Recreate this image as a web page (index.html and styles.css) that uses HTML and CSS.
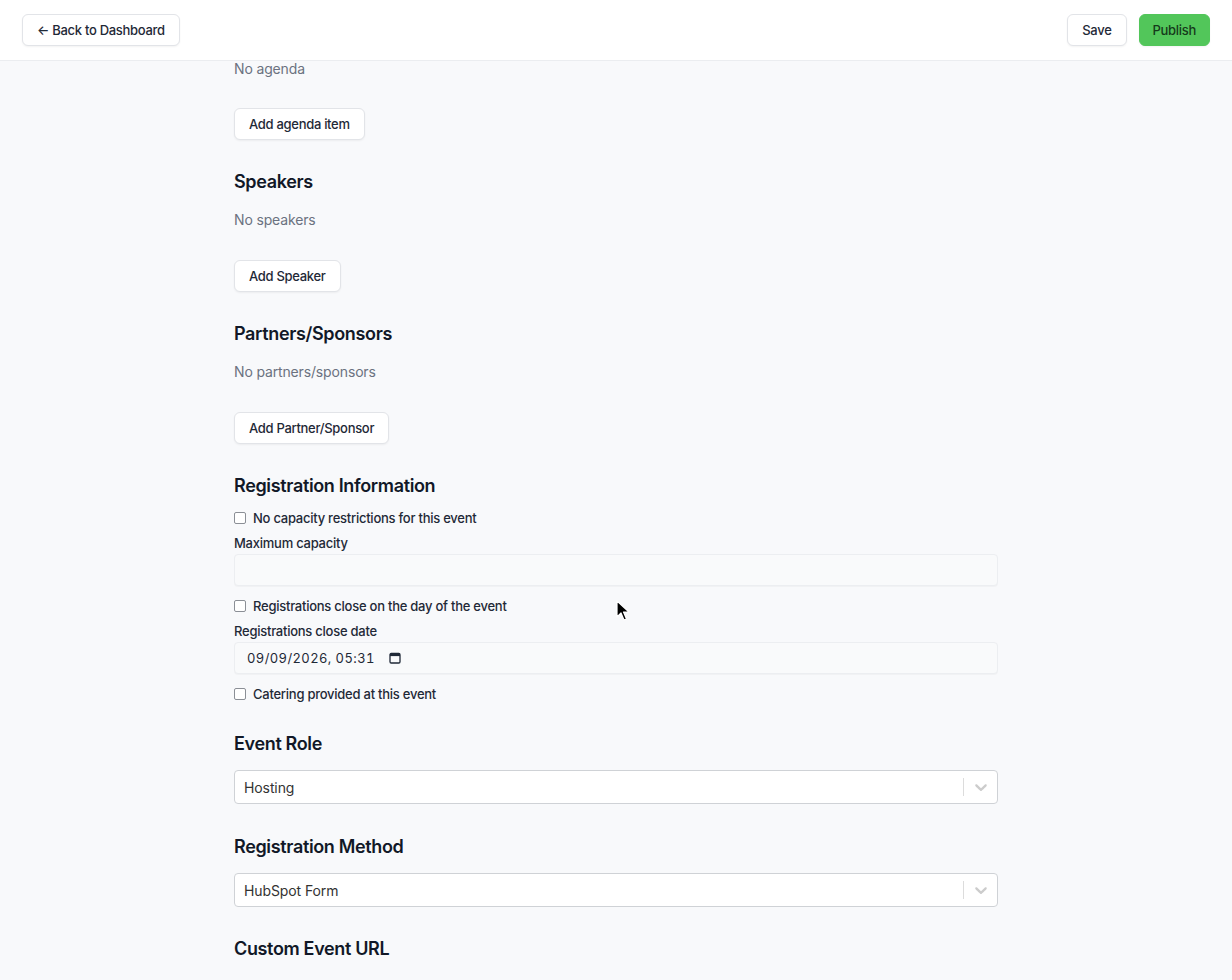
FILE: index.html
```html
<!DOCTYPE html>
<html lang="en">
<head>
    <meta charset="UTF-8">
    <meta name="viewport" content="width=device-width, initial-scale=1.0">
    <title>Edit Event</title>
    <link rel="stylesheet" href="styles.css">
</head>
<body>
    <header class="topbar">
        <button class="btn">← Back to Dashboard</button>
        <div class="topbar-actions">
            <button class="btn">Save</button>
            <button class="btn btn-publish">Publish</button>
        </div>
    </header>

    <main class="editor">
        <section class="block block-first">
            <p class="empty">No agenda</p>
            <button class="btn">Add agenda item</button>
        </section>

        <section class="block">
            <h2>Speakers</h2>
            <p class="empty">No speakers</p>
            <button class="btn">Add Speaker</button>
        </section>

        <section class="block">
            <h2>Partners/Sponsors</h2>
            <p class="empty">No partners/sponsors</p>
            <button class="btn">Add Partner/Sponsor</button>
        </section>

        <section class="block block-reg">
            <h2>Registration Information</h2>
            <label class="check"><span class="box"></span>No capacity restrictions for this event</label>
            <div class="field">
                <label class="field-label">Maximum capacity</label>
                <div class="input"></div>
            </div>
            <label class="check"><span class="box"></span>Registrations close on the day of the event</label>
            <div class="field">
                <label class="field-label">Registrations close date</label>
                <div class="input input-date">
                    <span class="date-value">09/09/2026, 05:31</span>
                    <svg class="cal" width="12" height="12" viewBox="0 0 12 12"><rect x="1" y="1.5" width="10" height="9.5" rx="1.2" fill="none" stroke="#1f2937" stroke-width="1.3"/><rect x="1" y="1.5" width="10" height="2.6" fill="#1f2937"/></svg>
                </div>
            </div>
            <label class="check"><span class="box"></span>Catering provided at this event</label>
        </section>

        <section class="block block-select">
            <h2>Event Role</h2>
            <div class="select">
                <span class="select-value">Hosting</span>
                <span class="select-sep"></span>
                <svg class="select-arrow" width="20" height="20" viewBox="0 0 20 20"><path d="M4.516 7.548c0.436-0.446 1.043-0.481 1.576 0l3.908 3.747 3.908-3.747c0.533-0.481 1.141-0.446 1.574 0 0.436 0.445 0.408 1.197 0 1.615-0.406 0.418-4.695 4.502-4.695 4.502-0.217 0.223-0.502 0.335-0.787 0.335s-0.57-0.112-0.789-0.335c0 0-4.287-4.084-4.695-4.502s-0.436-1.17 0-1.615z"/></svg>
            </div>
        </section>

        <section class="block block-select">
            <h2>Registration Method</h2>
            <div class="select">
                <span class="select-value">HubSpot Form</span>
                <span class="select-sep"></span>
                <svg class="select-arrow" width="20" height="20" viewBox="0 0 20 20"><path d="M4.516 7.548c0.436-0.446 1.043-0.481 1.576 0l3.908 3.747 3.908-3.747c0.533-0.481 1.141-0.446 1.574 0 0.436 0.445 0.408 1.197 0 1.615-0.406 0.418-4.695 4.502-4.695 4.502-0.217 0.223-0.502 0.335-0.787 0.335s-0.57-0.112-0.789-0.335c0 0-4.287-4.084-4.695-4.502s-0.436-1.17 0-1.615z"/></svg>
            </div>
        </section>

        <section class="block block-select block-last">
            <h2>Custom Event URL</h2>
        </section>
    </main>

    <svg class="cursor" width="16" height="22" viewBox="0 0 16 22"><path d="M1 1 L1 17 L5 13 L8 20 L10.5 19 L7.5 12 L13 12 Z" fill="#000" stroke="#fff" stroke-width="1.2" stroke-linejoin="round"/></svg>
</body>
</html>
```

FILE: styles.css
```css
* {margin:0;padding:0;box-sizing:border-box;}
body {background-color:#f8f9fb;color:#111827;font-family:'Inter', 'Noto Sans', sans-serif;min-height:100vh;padding-top:57px;}
.topbar {position:fixed;top:0;left:0;right:0;height:61px;background:#fff;border-bottom:1px solid #ebedf0;display:flex;justify-content:space-between;align-items:center;padding:0 22px;z-index:10;}
.topbar-actions {display:flex;gap:12px;}
.btn {height:32px;padding:0 14px;background:#fff;border:1px solid #e2e4e8;border-radius:6px;box-shadow:0 1px 2px rgba(0,0,0,.05);font-family:inherit;font-size:13px;font-weight:500;letter-spacing:-.3px;color:#1f2937;cursor:pointer;}
.topbar-actions .btn-publish {background:#52c65a;border-color:#52c65a;color:#163a1a;padding:0 13px;}
.editor {width:764px;margin:0 auto;}
.block {padding-top:28px;}
.block-first {padding-top:0;}
.block h2 {font-size:18px;line-height:28px;font-weight:600;color:#111827;letter-spacing:-.35px;}
.empty {font-size:14px;line-height:24px;color:#6b7280;letter-spacing:-.15px;margin-top:12px;margin-bottom:28px;}
.block-first .empty {margin-top:0;margin-bottom:27px;}
.check {display:flex;align-items:center;gap:7px;font-size:13px;line-height:20px;font-weight:500;letter-spacing:-.25px;color:#1f2937;}
.block-reg h2 + .check {margin-top:8px;}
.box {width:12px;height:12px;border:1px solid #8b8f96;border-radius:2px;background:#fff;}
.field {margin-top:5px;margin-bottom:10px;}
.field-label {display:block;font-size:13px;line-height:20px;font-weight:500;letter-spacing:-.25px;color:#1f2937;margin-bottom:1px;}
.input {height:32px;background:#f9fafb;border:1px solid #eceef1;border-radius:4px;box-shadow:0 1px 1px rgba(0,0,0,.03);}
.input-date {display:flex;align-items:center;padding-left:12px;}
.date-value {font-size:13px;color:#1f2937;font-variant-numeric:tabular-nums;letter-spacing:.4px;}
.cal {margin-left:14px;}
.block-select {padding-top:26px;}
.block-select + .block-select {padding-top:29px;}
.block-select + .block-last {padding-top:28px;}
.block-select h2 {margin-bottom:12px;}
.select {height:34px;background:#fff;border:1px solid #cfd2d6;border-radius:4px;display:flex;align-items:center;padding-left:9px;}
.select-value {flex:1;font-size:14px;letter-spacing:-.1px;color:#333;}
.select-sep {width:1px;height:18px;background:#dcdcdc;}
.select-arrow {fill:#cccccc;margin:0 6px 0 7px;}
.cursor {position:fixed;left:616px;top:600px;}
```
